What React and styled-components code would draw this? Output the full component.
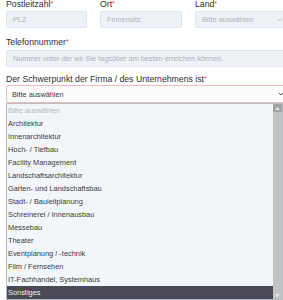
import React from 'react';
import styled, { createGlobalStyle } from 'styled-components';

const Global = createGlobalStyle`
    html, body {
        margin: 0;
        background: #ffffff;
        overflow: hidden;
        font-family: "Liberation Sans", Arial, sans-serif;
        -webkit-font-smoothing: antialiased;
    }
`;

const Page = styled.div`
    width: 285px;
    padding-left: 6px;
`;

const Row = styled.div`
    display: grid;
    grid-template-columns: 81px 82px 1fr;
    column-gap: 13px;
`;

const Group = styled.div`
    margin-top: ${p => p.$top || 0}px;
`;

const Label = styled.div`
    font-size: 8.7px;
    line-height: 10px;
    color: #2e2e2e;
    margin-top: ${p => p.$first ? -1 : 0}px;
    margin-bottom: ${p => p.$gap}px;
    white-space: nowrap;
`;

const Star = styled.span`
    color: #e8394a;
    font-size: 7px;
    vertical-align: top;
`;

const Field = styled.div`
    box-sizing: border-box;
    height: ${p => p.$h || 17}px;
    border: 1px solid ${p => p.$focus ? '#f1bcbc' : '#dfe5ec'};
    border-radius: 2px;
    background: ${p => p.$focus ? '#fcfcfd' : '#eef2f6'};
    color: ${p => p.$focus ? '#3a3a3a' : '#aab1b9'};
    font-size: 7.3px;
    padding: 0 ${p => p.$focus ? 5 : 6}px;
    display: flex;
    align-items: center;
    justify-content: space-between;
    white-space: nowrap;
    overflow: hidden;
`;

const Chevron = ({ color = '#9aa2ab' }) => (
    <svg width="6" height="4" viewBox="0 0 6 4" style={{ marginRight: 1 }}>
        <path d="M0.8 0.8 L3 3 L5.2 0.8" fill="none" stroke={color} strokeWidth="1" />
    </svg>
);

const Dropdown = styled.div`
    width: 277px;
    box-sizing: border-box;
    border: 1px solid #b9bcc0;
    background: #f2f5f9;
    display: flex;
`;

const List = styled.div`
    flex: 1;
`;

const Item = styled.div`
    height: 13px;
    line-height: 13px;
    font-size: 7.4px;
    padding-left: 1px;
    color: ${p => p.$muted ? '#b4b8bd' : p.$active ? '#f0f0f2' : '#3c3c3c'};
    background: ${p => p.$active ? '#4a4a56' : 'transparent'};
    white-space: nowrap;
`;

const Scrollbar = styled.div`
    width: 9px;
    background: #c3c3c3;
    display: flex;
    flex-direction: column;
    justify-content: space-between;
`;

const ScrollButton = styled.div`
    height: 8px;
    background: ${p => p.$dark ? '#a3a3a3' : '#c3c3c3'};
    display: flex;
    align-items: center;
    justify-content: center;
`;

const Arrow = ({ down }) => (
    <svg width="5" height="3" viewBox="0 0 5 3">
        <path d={down ? 'M0 0 L5 0 L2.5 3 Z' : 'M0 3 L5 3 L2.5 0 Z'} fill="#e4e4e4" />
    </svg>
);

const options = [
    'Architektur',
    'Innenarchitektur',
    'Hoch- / Tiefbau',
    'Facility Management',
    'Landschaftsarchitektur',
    'Garten- und Landschaftsbau',
    'Stadt- / Bauleitplanung',
    'Schreinerei / Innenausbau',
    'Messebau',
    'Theater',
    'Eventplanung / -technik',
    'Film / Fernsehen',
    'IT-Fachhandel, Systemhaus',
    'Sonstiges',
];

export default () => (
    <Page>
        <Global />
        <Row>
            <Group>
                <Label $first $gap={2}>Postleitzahl<Star>*</Star></Label>
                <Field>PLZ</Field>
            </Group>
            <Group>
                <Label $first $gap={2}>Ort<Star>*</Star></Label>
                <Field>Firmensitz</Field>
            </Group>
            <Group>
                <Label $first $gap={2}>Land<Star>*</Star></Label>
                <Field>Bitte auswählen<Chevron color="#b8bec5" /></Field>
            </Group>
        </Row>

        <Group $top={9}>
            <Label $gap={3}>Telefonnummer<Star>*</Star></Label>
            <Field>Nummer unter der wir Sie tagsüber am besten erreichen können.</Field>
        </Group>

        <Group $top={7}>
            <Label $gap={1}>Der Schwerpunkt der Firma / des Unternehmens ist<Star>*</Star></Label>
            <Field $focus $h={18}>Bitte auswählen<Chevron color="#555" /></Field>
            <Dropdown>
                <List>
                    <Item $muted>Bitte auswählen</Item>
                    {options.map(o => (
                        <Item key={o} $active={o === 'Sonstiges'}>{o}</Item>
                    ))}
                </List>
                <Scrollbar>
                    <ScrollButton $dark><Arrow /></ScrollButton>
                    <ScrollButton><Arrow down /></ScrollButton>
                </Scrollbar>
            </Dropdown>
        </Group>
    </Page>
);
